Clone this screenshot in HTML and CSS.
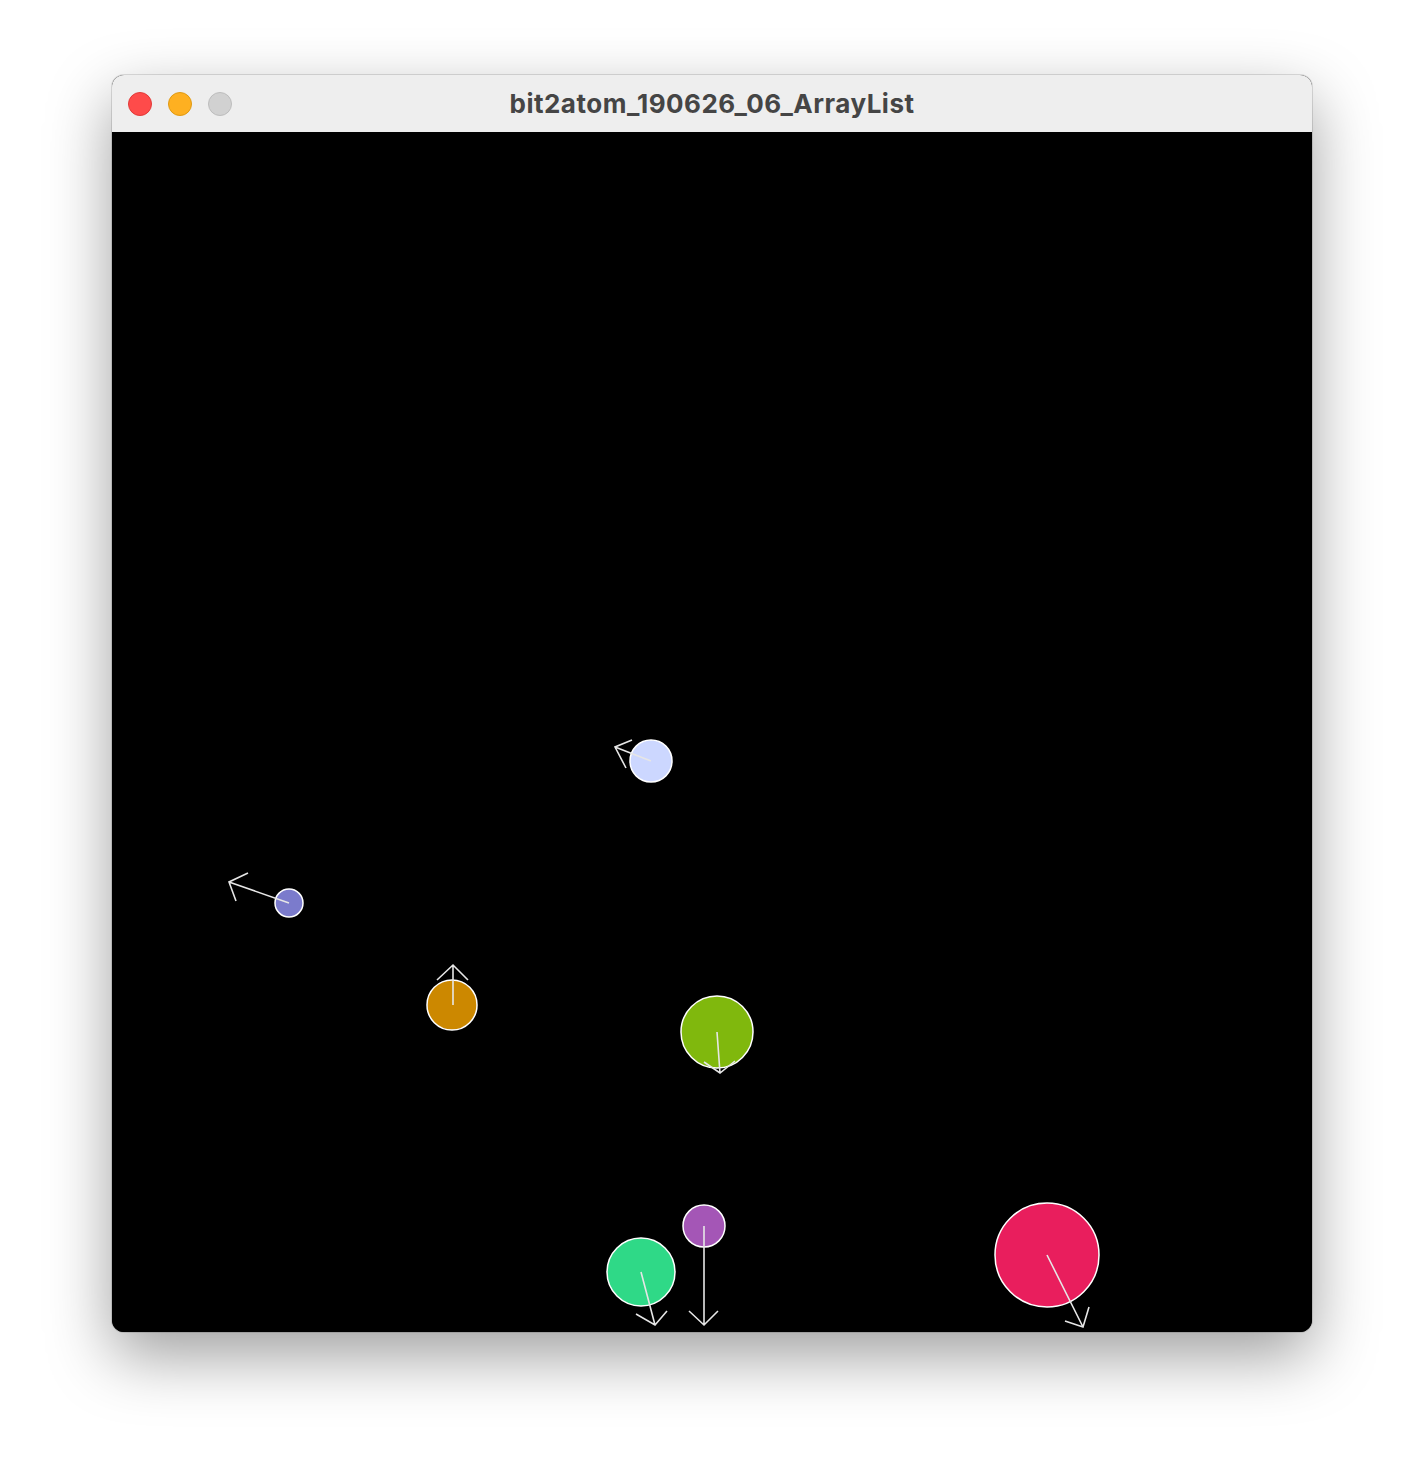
FILE: index.html
```html
<!DOCTYPE html>
<html lang="en">
<head>
    <meta charset="UTF-8">
    <title>bit2atom_190626_06_ArrayList</title>
    <link rel="stylesheet" href="styles.css">
</head>
<body>
    <div class="window">
        <div class="titlebar">
            <div class="lights">
                <span class="light red"></span>
                <span class="light yellow"></span>
                <span class="light gray"></span>
            </div>
            <div class="title">bit2atom_190626_06_ArrayList</div>
        </div>
        <svg class="canvas" width="1200" height="1200" viewBox="0 0 1200 1200">
            <g class="ball">
                <circle cx="539" cy="629" r="21" fill="#ccd7ff"/>
                <path d="M539 629 L503 615 M520 608 L503 615 L514 636"/>
            </g>
            <g class="ball">
                <circle cx="177" cy="771" r="14" fill="#7b7bcc"/>
                <path d="M177 771 L117 750 M136 741 L117 750 L124 769"/>
            </g>
            <g class="ball">
                <circle cx="340" cy="873" r="25" fill="#cc8800"/>
                <path d="M341 873 L341 833 M325 848 L341 833 L356 848"/>
            </g>
            <g class="ball">
                <circle cx="605" cy="900" r="36" fill="#80b80d"/>
                <path d="M605 900 L608 941 M592 930 L608 941 L623 929"/>
            </g>
            <g class="ball">
                <circle cx="529" cy="1140" r="34" fill="#2fd987"/>
                <path d="M529 1140 L543 1193 M524 1182 L543 1193 L555 1179"/>
            </g>
            <g class="ball">
                <circle cx="592" cy="1094" r="21" fill="#a456b6"/>
                <path d="M592 1094 L592 1193 M577 1179 L592 1193 L606 1179"/>
            </g>
            <g class="ball">
                <circle cx="935" cy="1123" r="52" fill="#e91e5d"/>
                <path d="M935 1123 L971 1195 M953 1189 L971 1195 L977 1175"/>
            </g>
        </svg>
    </div>
</body>
</html>
```

FILE: styles.css
```css
body {
    margin: 0;
    padding: 75px 0 148px;
    background: #ffffff;
    font-family: Inter, 'Noto Sans', sans-serif;
}
.window {
    width: 1200px;
    margin: 0 auto;
    border-radius: 12px;
    overflow: hidden;
    background: #000;
    box-shadow: 0 0 0 1px rgba(0,0,0,0.12), 0 24px 64px rgba(0,0,0,0.38);
}
.titlebar {
    height: 57px;
    background: #eeeeee;
    display: flex;
    align-items: center;
    position: relative;
}
.lights {
    display: flex;
    gap: 16px;
    padding-left: 16px;
}
.light {
    width: 24px;
    height: 24px;
    border-radius: 50%;
    box-sizing: border-box;
}
.red {
    background: #fe4b4a;
    border: 1px solid #e23a38;
}
.yellow {
    background: #feb021;
    border: 1px solid #e09a12;
}
.gray {
    background: #d1d1d1;
    border: 1px solid #bdbdbd;
}
.title {
    position: absolute;
    left: 0;
    right: 0;
    text-align: center;
    font-size: 26px;
    font-weight: 700;
    letter-spacing: 0.5px;
    color: #454545;
    pointer-events: none;
}
.canvas {
    display: block;
    background: #000;
}
.ball circle {
    stroke: #ffffff;
    stroke-width: 1.5;
}
.ball path {
    fill: none;
    stroke: #e6e6e6;
    stroke-width: 1.6;
}
```
